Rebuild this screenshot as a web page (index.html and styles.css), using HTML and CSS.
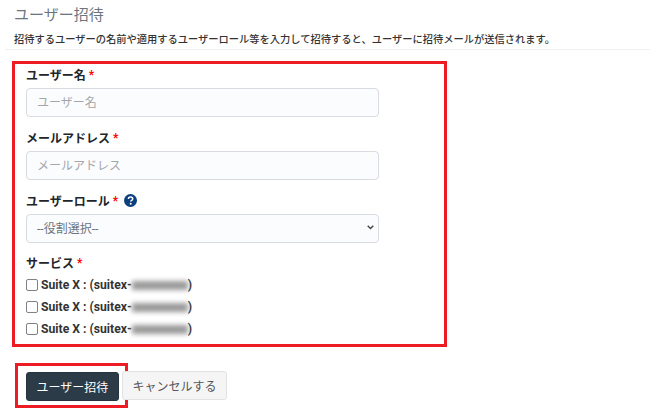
FILE: index.html
```html
<!DOCTYPE html>
<html lang="ja">
<head>
  <meta charset="UTF-8" />
  <meta name="viewport" content="width=device-width, initial-scale=1.0" />
  <title>ユーザー招待</title>
  <link rel="stylesheet" href="styles.css">
</head>
<body>
  <header class="page-head">
    <h2 class="title">ユーザー招待</h2>
    <p class="lead">招待するユーザーの名前や適用するユーザーロール等を入力して招待すると、ユーザーに招待メールが送信されます。</p>
  </header>

  <form class="invite-form">
    <div class="marked-box">
      <div class="field">
        <label class="field-label">ユーザー名 <span class="req">*</span></label>
        <input class="control" type="text" placeholder="ユーザー名" />
      </div>
      <div class="field">
        <label class="field-label">メールアドレス <span class="req">*</span></label>
        <input class="control" type="text" placeholder="メールアドレス" />
      </div>
      <div class="field field-last">
        <label class="field-label">ユーザーロール <span class="req">*</span>
          <svg class="help" width="13" height="13" viewBox="0 0 13 13">
            <circle cx="6.5" cy="6.5" r="6.5" fill="#0b3f7e" />
            <path d="M4.4 5.1c0-1.3 1-2 2.2-2s2.1.7 2.1 1.8c0 1.5-1.9 1.5-1.9 2.7" fill="none" stroke="#fff" stroke-width="1.5" />
            <circle cx="6.7" cy="9.7" r="1" fill="#fff" />
          </svg>
        </label>
        <div class="select-wrap">
          <select class="control select">
            <option>--役割選択--</option>
          </select>
          <svg class="caret" width="7" height="5" viewBox="0 0 7 5">
            <path d="M.7.8l2.8 2.8L6.3.8" fill="none" stroke="#444" stroke-width="1.4" />
          </svg>
        </div>
      </div>
      <div class="services">
        <label class="field-label">サービス <span class="req">*</span></label>
        <label class="check"><input type="checkbox" /> <span>Suite X : (suitex-<span class="blur"></span>)</span></label>
        <label class="check"><input type="checkbox" /> <span>Suite X : (suitex-<span class="blur"></span>)</span></label>
        <label class="check"><input type="checkbox" /> <span>Suite X : (suitex-<span class="blur"></span>)</span></label>
      </div>
    </div>

    <div class="actions">
      <div class="marked-btn">
        <button class="btn btn-primary" type="button">ユーザー招待</button>
      </div>
      <button class="btn btn-cancel" type="button">キャンセルする</button>
    </div>
  </form>
</body>
</html>
```

FILE: styles.css
```css
* {
  box-sizing: border-box;
}

body {
  margin: 0;
  height: 417px;
  overflow: hidden;
  background: #fff;
  color: #212529;
  font-family: "Roboto", "Liberation Sans", "Noto Sans CJK JP", sans-serif;
}

.page-head {
  margin-left: 5px;
  padding: 3px 0 0 9px;
  height: 50px;
  border-bottom: 1px solid #f0f0f0;
}

.title {
  margin: 0;
  font-size: 15px;
  line-height: 24px;
  font-weight: 400;
  color: #6c757d;
}

.lead {
  margin: 5px 0 0;
  font-size: 10.25px;
  line-height: 16px;
  font-weight: 500;
  color: #333;
  white-space: nowrap;
}

.invite-form {
  margin-left: 12px;
}

.marked-box {
  width: 435px;
  height: 286px;
  margin-top: 11px;
  padding: 0 65px 0 11px;
  border: 3px solid #ed1c24;
}

.field {
  margin-bottom: 10px;
}

.field-last {
  margin-bottom: 9px;
}

.field-label {
  display: flex;
  align-items: center;
  gap: 3px;
  height: 21px;
  margin-bottom: 3px;
  font-size: 12px;
  font-weight: 700;
  color: #212529;
}

.req {
  color: #f00;
}

.help {
  margin-left: 3px;
}

.control {
  display: block;
  width: 353px;
  height: 29px;
  padding: 0 10px;
  border: 1px solid #d8dbe2;
  border-radius: 4px;
  background: #fbfcfe;
  font: 12px "Roboto", "Noto Sans CJK JP", sans-serif;
  color: #6c757d;
}

.control::placeholder {
  color: #a3a7ab;
}

.select-wrap {
  position: relative;
  width: 353px;
}

.select {
  appearance: none;
}

.caret {
  position: absolute;
  top: 11px;
  right: 5px;
}

.services .field-label {
  margin-bottom: 1px;
}

.check {
  display: flex;
  align-items: center;
  gap: 3px;
  height: 22px;
  font-size: 12.2px;
  font-weight: 700;
  color: #333;
}

.check input {
  width: 12px;
  height: 12px;
  margin: 0;
  appearance: none;
  border: 1.5px solid #808088;
  border-radius: 2px;
  background: #fff;
}

.blur {
  display: inline-block;
  width: 56px;
  height: 9px;
  background: #999;
  filter: blur(2.5px);
  vertical-align: -1px;
}

.actions {
  display: flex;
  align-items: center;
  gap: 3px;
  margin-top: 16px;
  margin-left: 3px;
}

.marked-btn {
  display: flex;
  width: 113px;
  height: 45px;
  padding: 6px 6px 4px 8px;
  border: 3px solid #ed1c24;
  margin-right: -9px;
}

.btn {
  height: 29px;
  border-radius: 3px;
  font: 12px "Roboto", "Noto Sans CJK JP", sans-serif;
  padding: 0;
}

.btn-primary {
  width: 93px;
  border: 1px solid #24343f;
  background: #2b3c48;
  color: #fff;
}

.btn-cancel {
  width: 105px;
  position: relative;
  border: 1px solid #e2e2e2;
  background: #f5f5f5;
  color: #555;
}
```
